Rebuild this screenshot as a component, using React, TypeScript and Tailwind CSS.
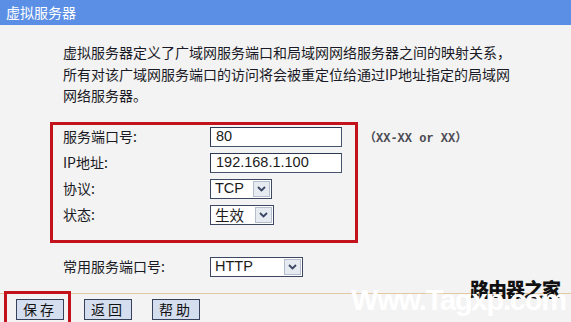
import { ReactNode } from "react";

const cjk = "font-['Noto_Sans_CJK_SC',sans-serif]";

function TextBox({ value }: { value: string }) {
  return (
    <div className="flex h-[20px] w-[132px] items-center border border-[#46546e] border-t-[#2c3850] border-l-[#2c3850] bg-white pl-[5px] font-['Liberation_Sans',sans-serif] text-[14.5px] text-[#1b1b1b]">
      {value}
    </div>
  );
}

function Select({ value, width, cjkText }: { value: string; width: string; cjkText?: boolean }) {
  return (
    <div className={`flex h-[20px] items-stretch border border-[#3c4862] bg-white ${width}`}>
      <div
        className={`flex flex-1 items-center pl-[4px] text-[14.5px] text-[#1b1b1b] ${
          cjkText ? cjk : "font-['Liberation_Sans',sans-serif]"
        }`}
      >
        {value}
      </div>
      <div className="m-[1px] flex w-[17px] items-center justify-center border border-[#b3bdcc] bg-[#e6eaf1]">
        <svg width="9" height="6" viewBox="0 0 9 6">
          <path d="M1 1 L4.5 4.5 L8 1" fill="none" stroke="#3a4763" strokeWidth="1.8" />
        </svg>
      </div>
    </div>
  );
}

function Row({ label, children }: { label: string; children: ReactNode }) {
  return (
    <div className="flex h-[20px] items-center">
      <div className={`w-[147px] text-[14px] text-[#1a1a24] ${cjk}`}>{label}</div>
      {children}
    </div>
  );
}

function Btn({ label }: { label: string }) {
  return (
    <div
      className={`flex h-[21px] w-[48px] items-center justify-center border border-[#36415c] bg-[#d5deee] text-[14px] tracking-[3px] text-[#111] ${cjk}`}
    >
      {label}
    </div>
  );
}

export default function App() {
  return (
    <div className="relative h-[322px] w-[571px] overflow-hidden bg-[#f3f3f3]">
      <div className={`flex h-[25px] items-center bg-[#5b8fe6] pl-[6px] text-[14px] text-white ${cjk}`}>
        虚拟服务器
      </div>

      <p className={`ml-[63px] mt-[17px] text-[14px] leading-[21.5px] text-[#1a1a26] ${cjk}`}>
        虚拟服务器定义了广域网服务端口和局域网网络服务器之间的映射关系，
        <br />
        所有对该广域网服务端口的访问将会被重定位给通过IP地址指定的局域网
        <br />
        网络服务器。
      </p>

      <div className="ml-[50px] mt-[15px] flex items-start">
        <div className="flex h-[121px] w-[308px] flex-col gap-[6px] border-[3px] border-[#c2121c] pl-[10px] pt-[2px]">
          <Row label="服务端口号:">
            <TextBox value="80" />
          </Row>
          <Row label="IP地址:">
            <TextBox value="192.168.1.100" />
          </Row>
          <Row label="协议:">
            <Select value="TCP" width="w-[62px]" />
          </Row>
          <Row label="状态:">
            <Select value="生效" width="w-[64px]" cjkText />
          </Row>
        </div>
        <div className="ml-[6px] mt-[6px] font-['Liberation_Mono',monospace] text-[12px] font-bold text-[#4a4a52]">
          <span className={cjk}>（</span>XX-XX or XX<span className={cjk}>）</span>
        </div>
      </div>

      <div className="ml-[63px] mt-[14px]">
        <Row label="常用服务端口号:">
          <Select value="HTTP" width="w-[93px]" />
        </Row>
      </div>

      <div className="mt-[16px] h-[1px] bg-[#e4c8a2]" />

      <div className="ml-[16px] mt-[5px] flex gap-[20px]">
        <Btn label="保存" />
        <Btn label="返回" />
        <Btn label="帮助" />
      </div>

      {/* highlight around save */}
      <div className="absolute left-[4px] top-[291px] h-[40px] w-[67px] border-[3px] border-[#c2121c]" />

      {/* watermark */}
      <div className="absolute left-[470px] top-[279px] text-[19px] font-black leading-none tracking-[-1px] text-[#111] font-['Noto_Sans_CJK_SC',sans-serif]">
        路由器之家
      </div>
      <div className="absolute left-[351px] top-[286px] font-['Liberation_Sans',sans-serif] text-[29px] font-bold leading-none tracking-[-1.2px] text-white">
        Www.Tagxp.com
      </div>
    </div>
  );
}
